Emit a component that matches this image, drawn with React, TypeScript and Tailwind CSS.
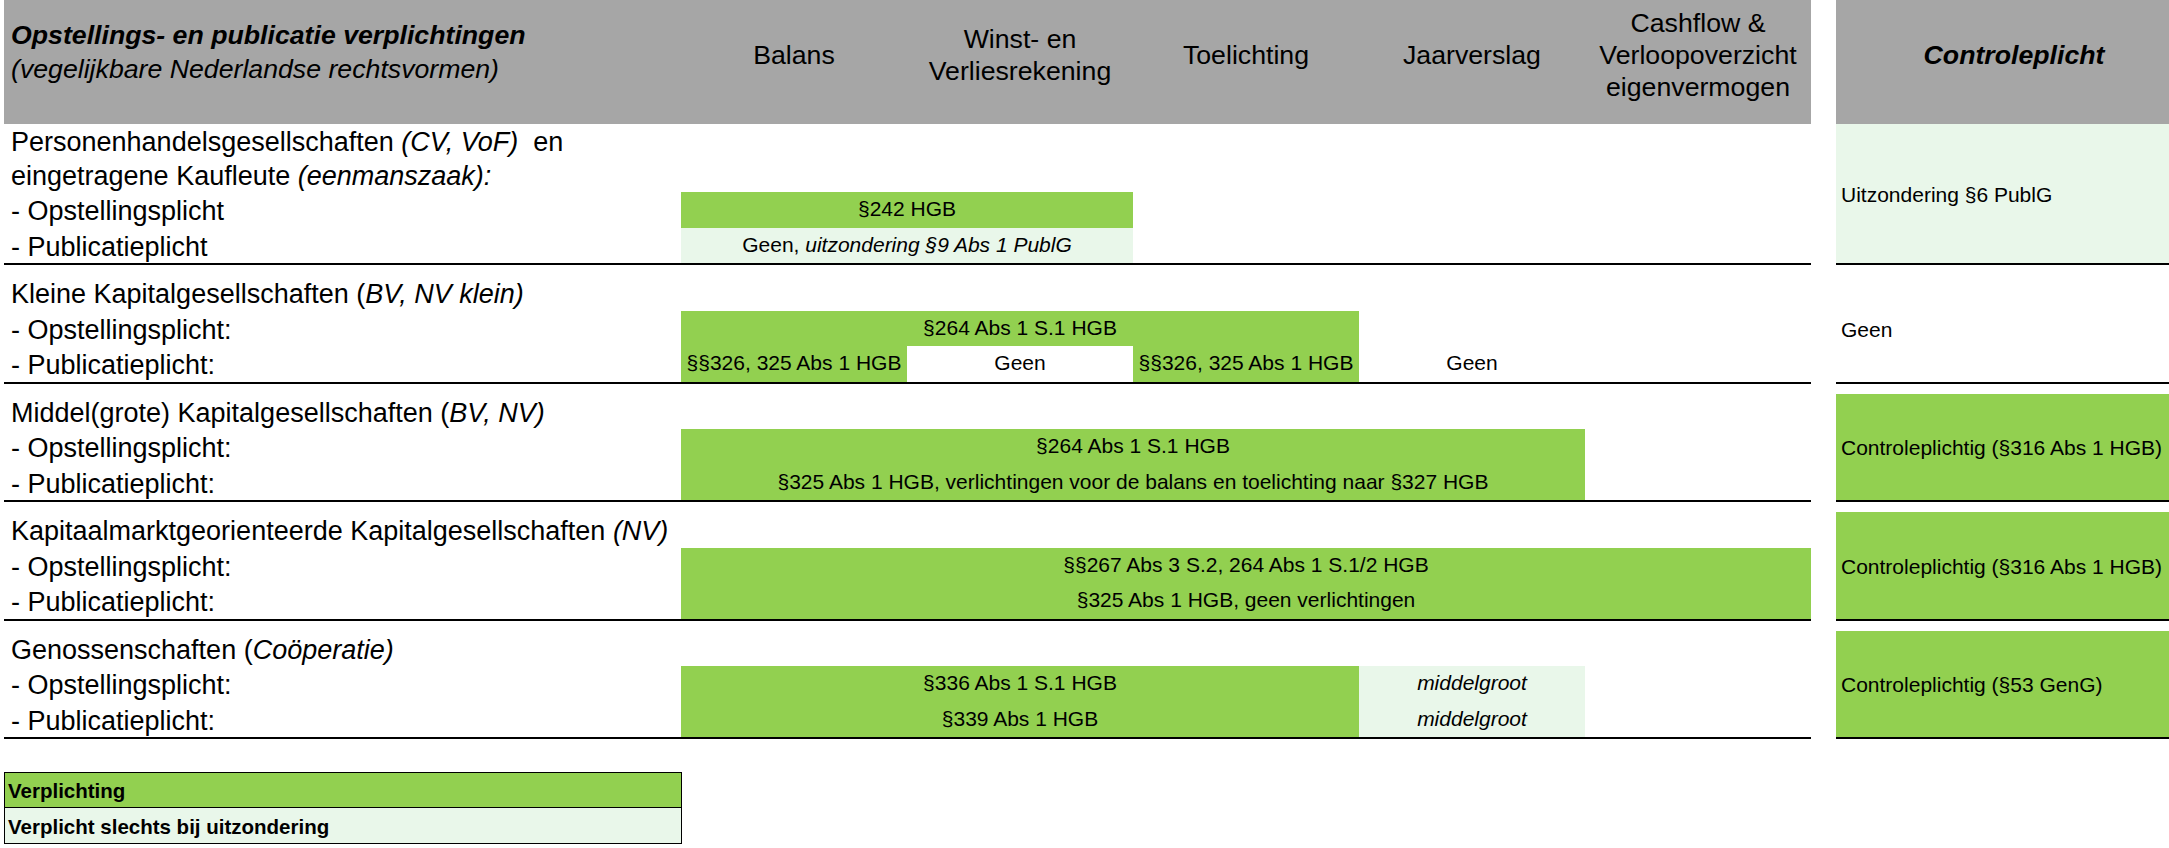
import React from 'react';
import clsx from 'clsx';

type Tone = 'green' | 'pale' | 'white' | 'none';

interface Cell {
    span: 1 | 2 | 3 | 4 | 5;
    tone?: Tone;
    content?: React.ReactNode;
}

interface RowDef {
    h: string;
    label: React.ReactNode;
    cells?: Cell[];
}

interface SectionDef {
    spacer: boolean;
    rows: RowDef[];
    control?: React.ReactNode;
    controlTone: Tone;
}

const spanWidth = {
    1: 'w-[226px]',
    2: 'w-[452px]',
    3: 'w-[678px]',
    4: 'w-[904px]',
    5: 'w-[1130px]',
};

const toneBg: Record<Tone, string> = {
    green: 'bg-[#92d050]',
    pale: 'bg-[#e9f7ea]',
    white: 'bg-white',
    none: '',
};

const sections: SectionDef[] = [
    {
        spacer: false,
        controlTone: 'pale',
        control: 'Uitzondering §6 PublG',
        rows: [
            { h: 'h-[34px]', label: <>Personenhandelsgesellschaften <i>(CV, VoF)</i>&nbsp; en</> },
            { h: 'h-[34px]', label: <>eingetragene Kaufleute <i>(eenmanszaak):</i></> },
            { h: 'h-[35.5px]', label: '- Opstellingsplicht', cells: [{ span: 2, tone: 'green', content: '§242 HGB' }] },
            {
                h: 'h-[35.5px]',
                label: '- Publicatieplicht',
                cells: [{ span: 2, tone: 'pale', content: <>Geen, <i>uitzondering §9 Abs 1 PublG</i></> }],
            },
        ],
    },
    {
        spacer: true,
        controlTone: 'none',
        control: 'Geen',
        rows: [
            { h: 'h-[35.5px]', label: <>Kleine Kapitalgesellschaften (<i>BV, NV klein)</i></> },
            { h: 'h-[35.5px]', label: '- Opstellingsplicht:', cells: [{ span: 3, tone: 'green', content: '§264 Abs 1 S.1 HGB' }] },
            {
                h: 'h-[35.5px]',
                label: '- Publicatieplicht:',
                cells: [
                    { span: 1, tone: 'green', content: '§§326, 325 Abs 1 HGB' },
                    { span: 1, tone: 'white', content: 'Geen' },
                    { span: 1, tone: 'green', content: '§§326, 325 Abs 1 HGB' },
                    { span: 1, tone: 'none', content: 'Geen' },
                ],
            },
        ],
    },
    {
        spacer: true,
        controlTone: 'green',
        control: 'Controleplichtig (§316 Abs 1 HGB)',
        rows: [
            { h: 'h-[35.5px]', label: <>Middel(grote) Kapitalgesellschaften (<i>BV, NV)</i></> },
            { h: 'h-[35.5px]', label: '- Opstellingsplicht:', cells: [{ span: 4, tone: 'green', content: '§264 Abs 1 S.1 HGB' }] },
            {
                h: 'h-[35.5px]',
                label: '- Publicatieplicht:',
                cells: [{ span: 4, tone: 'green', content: '§325 Abs 1 HGB, verlichtingen voor de balans en toelichting naar §327 HGB' }],
            },
        ],
    },
    {
        spacer: true,
        controlTone: 'green',
        control: 'Controleplichtig (§316 Abs 1 HGB)',
        rows: [
            { h: 'h-[35.5px]', label: <>Kapitaalmarktgeorienteerde Kapitalgesellschaften <i>(NV)</i></> },
            { h: 'h-[35.5px]', label: '- Opstellingsplicht:', cells: [{ span: 5, tone: 'green', content: '§§267 Abs 3 S.2, 264 Abs 1 S.1/2 HGB' }] },
            { h: 'h-[35.5px]', label: '- Publicatieplicht:', cells: [{ span: 5, tone: 'green', content: '§325 Abs 1 HGB, geen verlichtingen' }] },
        ],
    },
    {
        spacer: true,
        controlTone: 'green',
        control: 'Controleplichtig (§53 GenG)',
        rows: [
            { h: 'h-[35.5px]', label: <>Genossenschaften (<i>Coöperatie)</i></> },
            {
                h: 'h-[35.5px]',
                label: '- Opstellingsplicht:',
                cells: [
                    { span: 3, tone: 'green', content: '§336 Abs 1 S.1 HGB' },
                    { span: 1, tone: 'pale', content: <i>middelgroot</i> },
                ],
            },
            {
                h: 'h-[35.5px]',
                label: '- Publicatieplicht:',
                cells: [
                    { span: 3, tone: 'green', content: '§339 Abs 1 HGB' },
                    { span: 1, tone: 'pale', content: <i>middelgroot</i> },
                ],
            },
        ],
    },
];

const TableRow: React.FC<RowDef> = ({ h, label, cells = [] }) => (
    <div className={clsx('flex', h)}>
        <div className="w-[677px] shrink-0 pl-[7px] pt-[3px] flex items-center text-[27px] whitespace-nowrap">
            <span>{label}</span>
        </div>
        {cells.map((c, i) => (
            <div
                key={i}
                className={clsx(
                    spanWidth[c.span],
                    toneBg[c.tone ?? 'none'],
                    'shrink-0 flex items-end justify-center pb-[3px] text-[21px] whitespace-nowrap'
                )}
            >
                <span>{c.content}</span>
            </div>
        ))}
    </div>
);

const Section: React.FC<SectionDef> = ({ spacer, rows, control, controlTone }) => (
    <div className="flex">
        <div className="w-[1807px] shrink-0 flex flex-col">
            {spacer && <div className="h-[10px]" />}
            {rows.map((r, i) => (
                <TableRow key={i} {...r} />
            ))}
            <div className="h-[2px] bg-black" />
        </div>
        <div className="w-[25px] shrink-0" />
        <div className="w-[356px] shrink-0 flex flex-col">
            {spacer && <div className="h-[10px]" />}
            <div className={clsx('flex-1 flex items-center pl-[5px] pt-[2px] text-[21px]', toneBg[controlTone])}>
                <span>{control}</span>
            </div>
            <div className="h-[2px] bg-black" />
        </div>
    </div>
);

const headers: string[][] = [
    ['Balans'],
    ['Winst- en', 'Verliesrekening'],
    ['Toelichting'],
    ['Jaarverslag'],
    ['Cashflow &', 'Verloopoverzicht', 'eigenvermogen'],
];

export default function App() {
    return (
        <div className="w-[2169px] h-[848px] overflow-hidden bg-white pl-[4px] text-black font-['Liberation_Sans',Arial,sans-serif]">
            {/* Header */}
            <div className="flex h-[124px]">
                <div className="w-[1807px] shrink-0 flex bg-[#a6a6a6]">
                    <div className="w-[677px] shrink-0 pl-[7px] pt-[18px] text-[26.7px] leading-[34px] whitespace-nowrap">
                        <div className="font-bold italic">Opstellings- en publicatie verplichtingen</div>
                        <div className="italic">(vegelijkbare Nederlandse rechtsvormen)</div>
                    </div>
                    {headers.map((lines, i) => (
                        <div key={i} className="w-[226px] shrink-0 flex flex-col items-center justify-center pb-[14px] text-[26.7px] leading-[32px] whitespace-nowrap">
                            {lines.map((l) => (
                                <div key={l}>{l}</div>
                            ))}
                        </div>
                    ))}
                </div>
                <div className="w-[25px] shrink-0" />
                <div className="w-[356px] shrink-0 bg-[#a6a6a6] flex items-center justify-center pb-[14px] text-[26.7px] font-bold italic">
                    Controleplicht
                </div>
            </div>

            {sections.map((s, i) => (
                <Section key={i} {...s} />
            ))}

            {/* Legend */}
            <div className="mt-[33px] w-[678px] border border-black text-[20.5px] font-bold">
                <div className="h-[35px] bg-[#92d050] border-b border-black flex items-end pl-[3px]">Verplichting</div>
                <div className="h-[35px] bg-[#e9f7ea] flex items-end pl-[3px]">Verplicht slechts bij uitzondering</div>
            </div>
        </div>
    );
}
